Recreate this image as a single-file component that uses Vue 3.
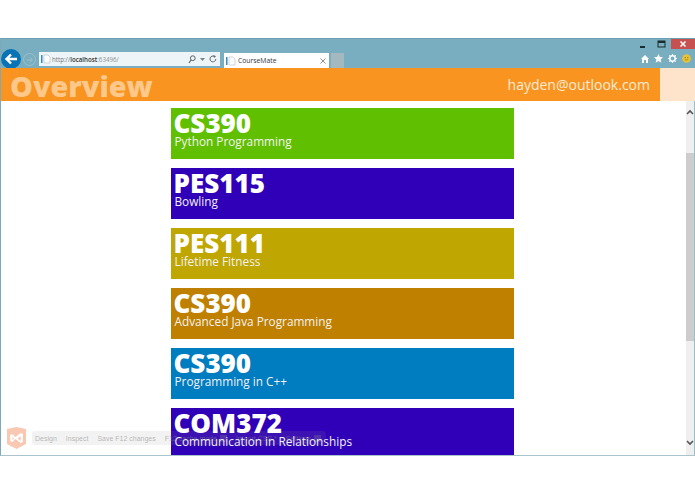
<script setup>
const courses = [
  { code: "CS390", name: "Python Programming", color: "#60c000" },
  { code: "PES115", name: "Bowling", color: "#3000b8" },
  { code: "PES111", name: "Lifetime Fitness", color: "#bfa600" },
  { code: "CS390", name: "Advanced Java Programming", color: "#bf8000" },
  { code: "CS390", name: "Programming in C++", color: "#007cc0" },
  { code: "COM372", name: "Communication in Relationships", color: "#3000b8" },
];
const devTools = [
  { label: "Design" },
  { label: "Inspect" },
  { label: "Save F12 changes" },
  { label: "F12 cache mode", box: true },
  { label: "Import CSS *" },
  { label: "Settings", box: true },
];
</script>

<template>
  <div class="screen">
    <div class="window">
      <div class="chrome">
        <div class="win-buttons">
          <span class="win-btn">
            <svg width="8" height="8" viewBox="0 0 8 8"><rect x="1" y="6" width="5" height="2" fill="#1c2b30" /></svg>
          </span>
          <span class="win-btn">
            <svg width="9" height="8" viewBox="0 0 9 8"><rect x="1" y="1" width="7" height="6" fill="none" stroke="#1c2b30" /><rect x="1" y="1" width="7" height="2" fill="#1c2b30" /></svg>
          </span>
          <span class="win-close">
            <svg width="8" height="8" viewBox="0 0 8 8"><path d="M1.5 1.5l5 5M6.5 1.5l-5 5" stroke="#fff" stroke-width="1.5" /></svg>
          </span>
        </div>
        <div class="nav-row">
          <span class="back">
            <svg width="14" height="12" viewBox="0 0 14 12"><path d="M13 6H3M7 1.5L2.5 6 7 10.5" fill="none" stroke="#fff" stroke-width="2.4" /></svg>
          </span>
          <span class="forward">
            <svg width="8" height="8" viewBox="0 0 8 8"><path d="M1 4h5M4 1.5L6.500 4 4 6.500" fill="none" stroke="#9fc0cb" stroke-width="1" /></svg>
          </span>
          <div class="address">
            <svg width="10" height="10" viewBox="0 0 10 10"><rect x="0" y="1" width="1.5" height="8" fill="#3a8ac4" /><path d="M3 1h4l2 2v6H3z" fill="#fff" stroke="#b9c4ca" stroke-width=".7" /></svg>
            <span class="url">http://<b>localhost</b><i>:63496/</i></span>
            <span class="addr-tools">
              <svg width="8" height="9" viewBox="0 0 8 9"><circle cx="4.800" cy="3.200" r="2.400" fill="none" stroke="#5c6468" /><path d="M3 5L1 8" stroke="#5c6468" stroke-width="1.200" /></svg>
              <svg width="5" height="3" viewBox="0 0 5 3"><path d="M0 0h5L2.500 3z" fill="#7b8387" /></svg>
              <svg width="8" height="8" viewBox="0 0 8 8"><path d="M6.800 4A2.900 2.900 0 1 1 5.500 1.500" fill="none" stroke="#5c6468" /><path d="M4.500 0L7 1.300 5 3z" fill="#5c6468" /></svg>
            </span>
          </div>
          <div class="tab">
            <svg width="10" height="10" viewBox="0 0 10 10"><rect x="0" y="1" width="1.5" height="8" fill="#3a8ac4" /><path d="M3 1h4l2 2v6H3z" fill="#fff" stroke="#b9c4ca" stroke-width=".7" /></svg>
            <span class="tab-title">CourseMate</span>
            <svg width="6" height="6" viewBox="0 0 6 6"><path d="M.5.5l5 5M5.500.5l-5 5" stroke="#8a9094" /></svg>
          </div>
          <span class="new-tab"></span>
          <div class="tools">
            <svg width="8" height="8" viewBox="0 0 8 8"><path d="M4 0L8 4H7V8H5V5H3V8H1V4H0z" fill="#fff" /></svg>
            <svg width="9" height="9" viewBox="0 0 10 10"><path d="M5 0l1.500 3.400 3.500.3-2.700 2.300.9 3.600L5 7.700 1.800 9.600 2.700 6 0 3.700l3.500-.3z" fill="#fff" /></svg>
            <svg width="9" height="9" viewBox="0 0 10 10"><circle cx="5" cy="5" r="3" fill="none" stroke="#fff" stroke-width="1.600" /><path d="M5 0v2M5 8v2M0 5h2M8 5h2M1.500 1.500l1.400 1.400M7.100 7.100l1.400 1.400M1.500 8.500l1.400-1.400M7.100 2.900l1.400-1.400" stroke="#fff" stroke-width="1.200" /></svg>
            <svg width="9" height="9" viewBox="0 0 10 10"><circle cx="5" cy="5" r="4.800" fill="#e8c33a" /><circle cx="3.500" cy="4" r=".7" fill="#8a6d10" /><circle cx="6.500" cy="4" r=".7" fill="#8a6d10" /><path d="M3 6.500h4" stroke="#8a6d10" stroke-width=".7" /></svg>
          </div>
        </div>
      </div>

      <div class="viewport">
        <header class="app-bar">
          <h1 class="page-title">Overview</h1>
          <span class="user">hayden@outlook.com</span>
          <span class="avatar"></span>
        </header>
        <div class="body-row">
          <main class="content">
            <div v-for="(c, i) in courses" :key="i" class="tile" :style="{ background: c.color }">
              <div class="code">{{ c.code }}</div>
              <div class="name">{{ c.name }}</div>
            </div>
          </main>
          <div class="scrollbar">
            <svg class="arrow-up" width="8" height="6" viewBox="0 0 8 6"><path d="M1 5l3-3 3 3" fill="none" stroke="#555" stroke-width="1.600" /></svg>
            <span class="thumb"></span>
            <svg class="arrow-down" width="8" height="6" viewBox="0 0 8 6"><path d="M1 1l3 3 3-3" fill="none" stroke="#555" stroke-width="1.600" /></svg>
          </div>
        </div>
        <div class="browser-link">
          <svg width="19" height="22" viewBox="0 0 18 22" preserveAspectRatio="none"><path d="M0 2l9-2 9 2v15l-9 5-9-5z" fill="#f8c8b2" /><path d="M3 8l2-1 3 3 5-4 2 1v8l-2 1-5-4-3 3-2-1zM5 10v3l1.500-1.500zM13 9l-3 2.500 3 2.500z" fill="#fff" fill-rule="evenodd" /></svg>
          <div class="link-bar">
            <span v-for="t in devTools" :key="t.label" class="link-item">
              {{ t.label }}
              <span v-if="t.box" class="link-box"></span>
            </span>
          </div>
        </div>
      </div>
    </div>
  </div>
</template>

<style scoped>
.screen {
  width: 695px;
  height: 494px;
  padding-top: 38px;
  box-sizing: border-box;
  background: #fff;
  font-family: "Open Sans", "Noto Sans", sans-serif;
  overflow: hidden;
}

.window {
  height: 418px;
  display: flex;
  flex-direction: column;
  border-left: 1px solid #7fa9b7;
  border-bottom: 1px solid #a9c4cd;
  box-sizing: border-box;
  background: #fff;
}

.chrome {
  height: 30px;
  flex: none;
  background: #78aebf;
  position: relative;
  border-top: 1px solid #6d9fae;
  box-sizing: border-box;
}

.win-buttons {
  position: absolute;
  top: 0;
  right: 0;
  display: flex;
  align-items: center;
}

.win-btn {
  width: 19px;
  height: 10px;
  display: flex;
  align-items: center;
  justify-content: center;
}

.win-close {
  width: 24px;
  height: 10px;
  background: #c75050;
  display: flex;
  align-items: center;
  justify-content: center;
}

.nav-row {
  position: absolute;
  left: 0;
  right: 0;
  bottom: 0;
  height: 18px;
  display: flex;
  align-items: flex-end;
}

.back {
  width: 20px;
  height: 20px;
  margin: 0 1px 0 0;
  align-self: center;
  flex: none;
  border-radius: 50%;
  background: #0a73b5;
  display: flex;
  align-items: center;
  justify-content: center;
}

.forward {
  width: 13px;
  height: 13px;
  margin-left: 1px;
  margin-bottom: 2px;
  flex: none;
  border-radius: 50%;
  border: 1px solid #9fc0cb;
  box-sizing: border-box;
  display: flex;
  align-items: center;
  justify-content: center;
}

.address {
  width: 181px;
  height: 14px;
  margin-left: 3px;
  margin-bottom: 2px;
  padding: 0 3px 0 2px;
  box-sizing: border-box;
  background: #eef5f8;
  display: flex;
  align-items: center;
  gap: 1px;
  font-size: 6.2px;
  color: #6e7579;
}

.url b {
  color: #2c3134;
  font-weight: 600;
}

.url i {
  font-style: normal;
  color: #8a9094;
}

.addr-tools {
  margin-left: auto;
  display: flex;
  align-items: center;
  gap: 4px;
}

.tab {
  width: 105px;
  height: 15px;
  margin-left: 4px;
  padding: 0 3px 0 2px;
  box-sizing: border-box;
  background: #fff;
  display: flex;
  align-items: center;
  gap: 2px;
  font-size: 6.8px;
  color: #33393c;
}

.tab-title {
  flex: 1;
}

.new-tab {
  width: 13px;
  height: 15px;
  background: #a3b8bf;
  margin-left: 2px;
}

.tools {
  margin-left: auto;
  margin-right: 4px;
  margin-bottom: 5px;
  display: flex;
  align-items: center;
  gap: 5px;
}

.viewport {
  flex: 1;
  min-height: 0;
  display: flex;
  flex-direction: column;
  position: relative;
}

.app-bar {
  height: 33px;
  flex: none;
  display: flex;
  align-items: center;
  background: #f8941f;
}

.page-title {
  margin: 2px 0 0 9px;
  font-size: 28.8px;
  line-height: 31px;
  font-weight: 800;
  color: #fdc88a;
}

.user {
  margin-left: auto;
  margin-right: 10px;
  font-size: 14px;
  color: #fdebd6;
}

.avatar {
  width: 35px;
  height: 33px;
  background: #fde4cb;
}

.body-row {
  flex: 1;
  min-height: 0;
  display: flex;
}

.content {
  flex: 1;
  min-width: 0;
  padding: 7px 0 0 170px;
  overflow: hidden;
  display: flex;
  flex-direction: column;
  gap: 9px;
}

.tile {
  flex: none;
  width: 343px;
  height: 51px;
  padding: 5px 0 0 2.5px;
  box-sizing: border-box;
  color: #fff;
}

.code {
  position: relative;
  z-index: 1;
  font-size: 26px;
  line-height: 21px;
  font-weight: 800;
}

.name {
  position: relative;
  z-index: 1;
  padding-left: 1px;
  font-size: 11.8px;
  line-height: 14px;
  color: #f2f2f2;
}

.scrollbar {
  width: 9px;
  flex: none;
  display: flex;
  flex-direction: column;
  background: #efefef;
  border-right: 1px solid #9fbcc6;
  box-sizing: border-box;
}

.arrow-up {
  flex: none;
  margin: 8px 0 38px;
}

.arrow-down {
  flex: none;
  margin: auto 0 9px;
}

.thumb {
  height: 188px;
  background: #cdcdcd;
}

.browser-link {
  position: absolute;
  z-index: 0;
  left: 6px;
  bottom: 6px;
  display: flex;
  align-items: center;
  gap: 6px;
}

.link-bar {
  display: flex;
  align-items: center;
  gap: 9px;
  height: 14px;
  padding: 0 5px 0 3px;
  background: rgba(150, 150, 150, 0.12);
  border-radius: 3px;
  font-family: "Liberation Sans", sans-serif;
  font-size: 7px;
  color: rgba(130, 130, 130, 0.55);
}

.link-item {
  display: flex;
  align-items: center;
  gap: 3px;
  white-space: nowrap;
}

.link-box {
  width: 7px;
  height: 7px;
  background: rgba(150, 150, 150, 0.25);
}
</style>
